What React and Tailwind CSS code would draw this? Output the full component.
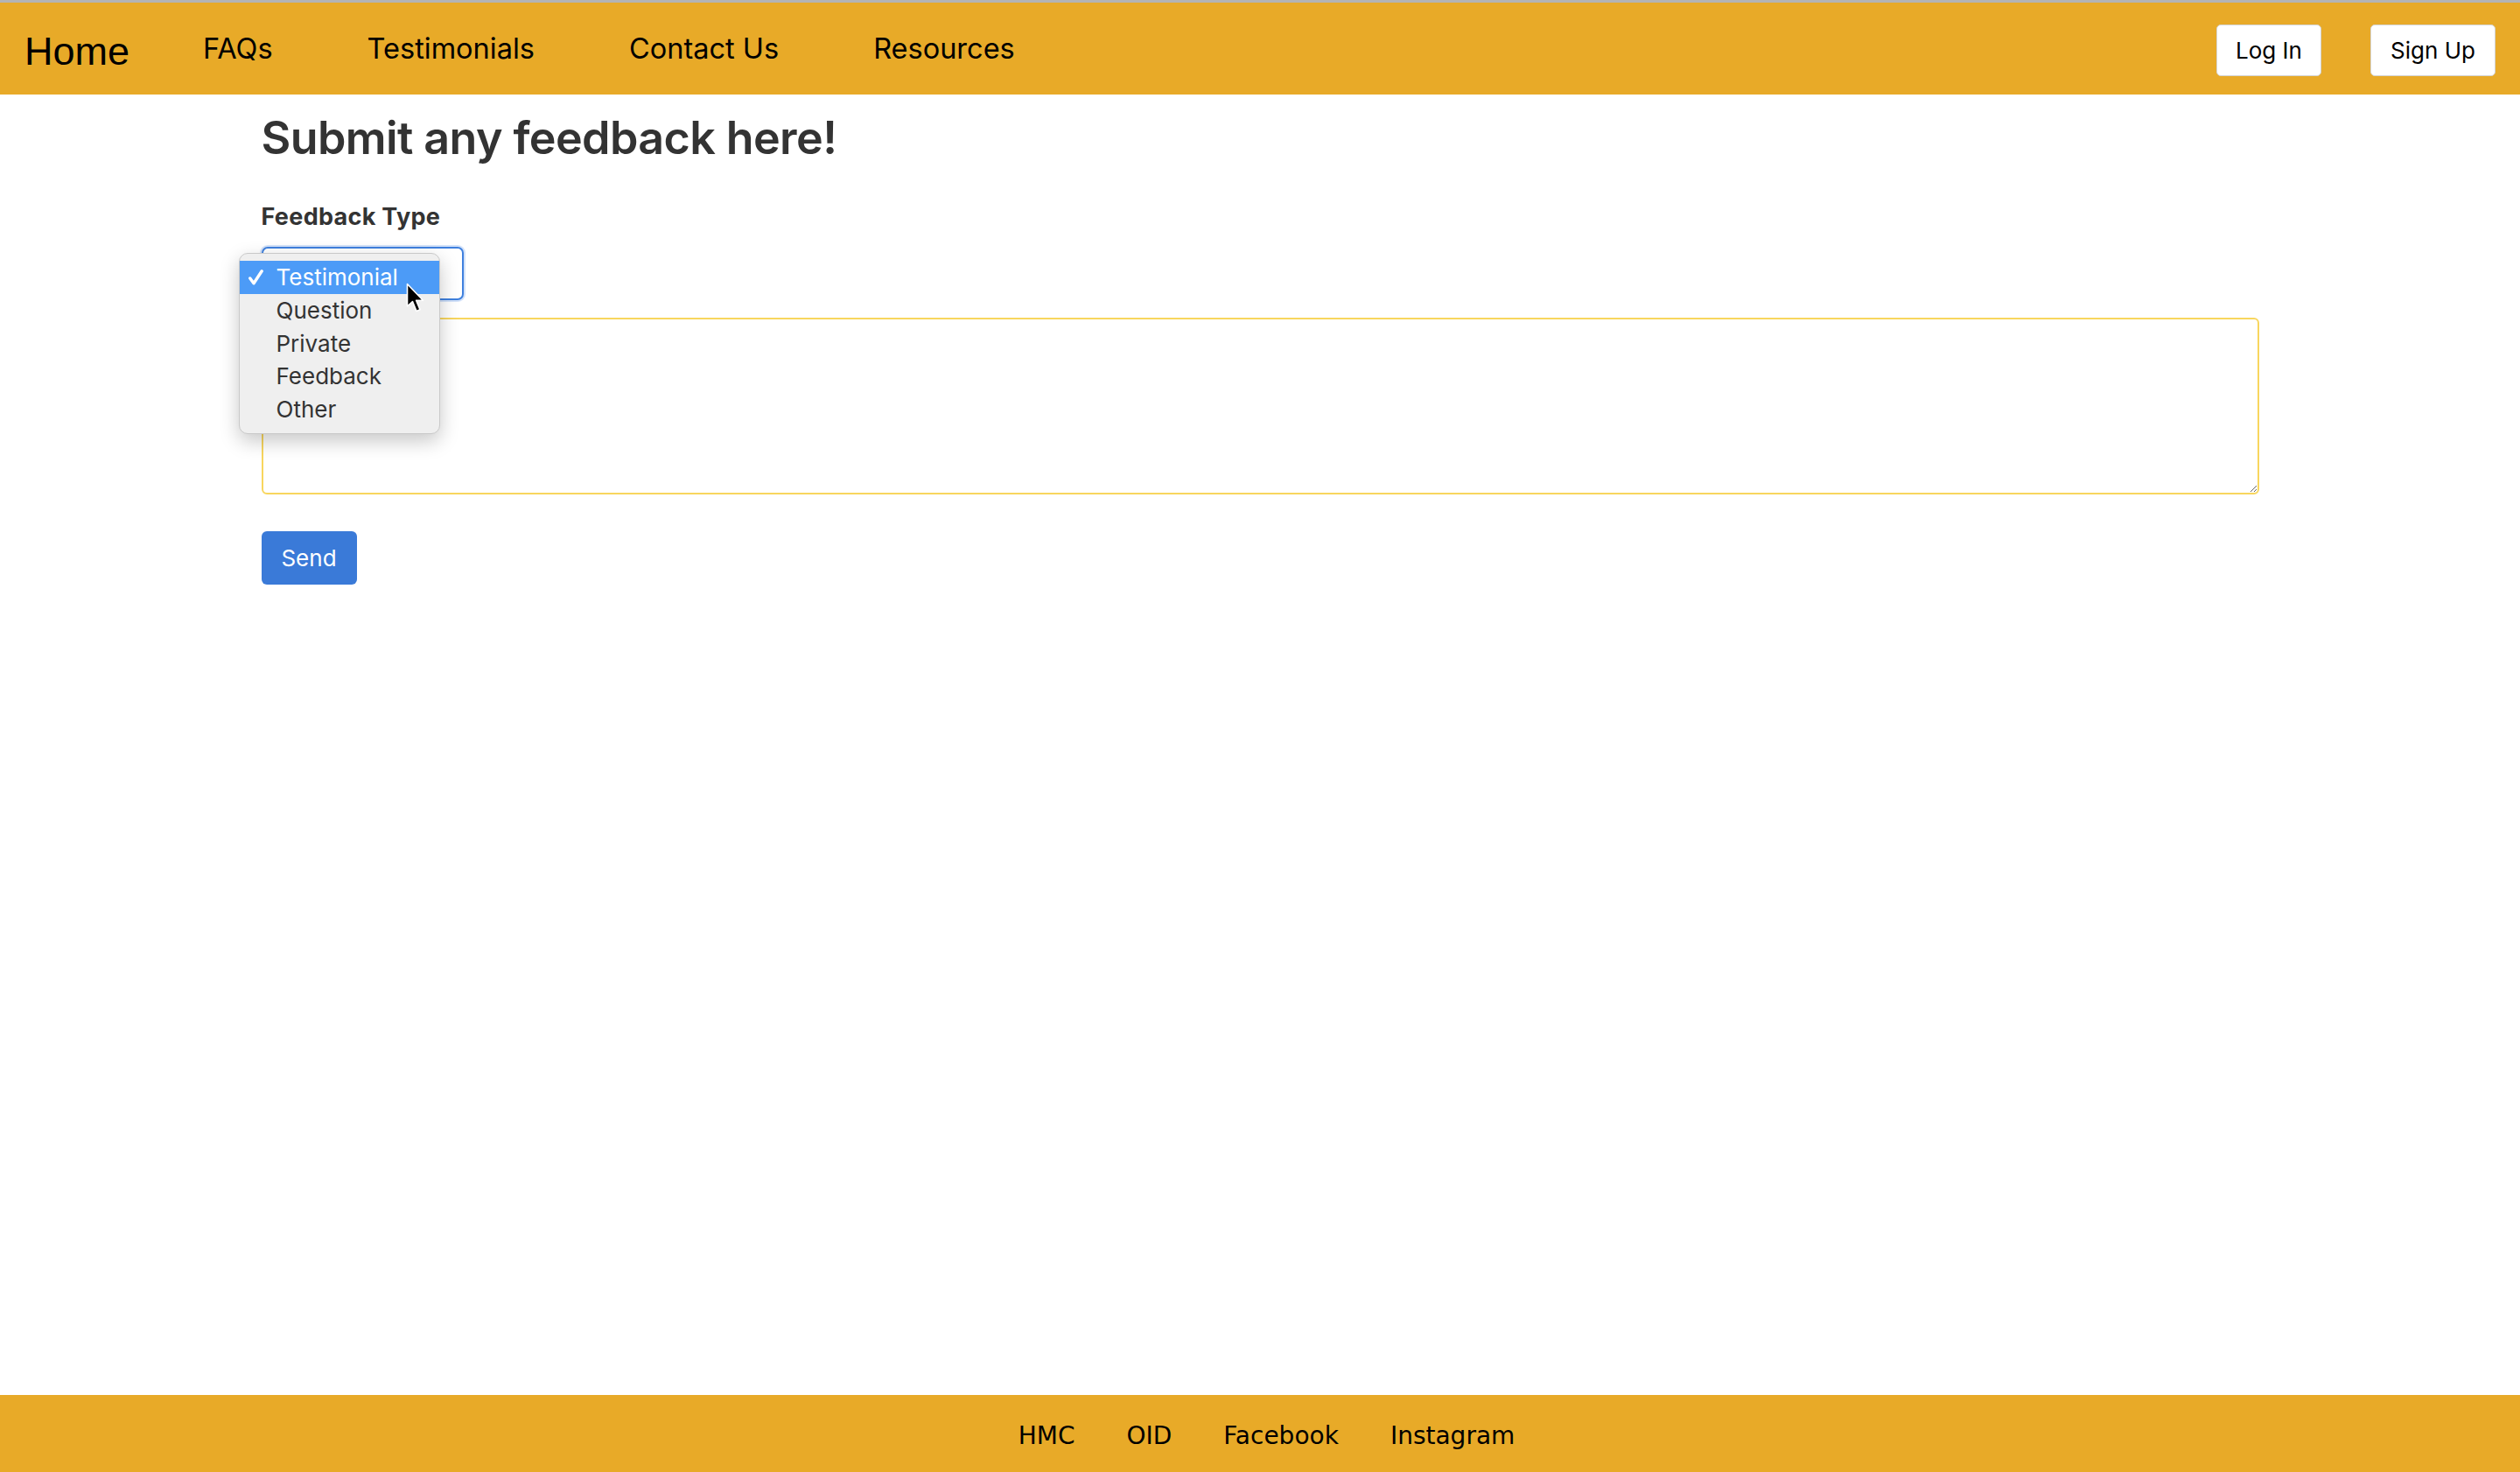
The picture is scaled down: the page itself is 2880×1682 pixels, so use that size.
import React from "react";

export default function App() {
  const navLinks = ["FAQs", "Testimonials", "Contact Us", "Resources"];
  const options = ["Testimonial", "Question", "Private", "Feedback", "Other"];
  const footerLinks = ["HMC", "OID", "Facebook", "Instagram"];
  return (
    <div className="h-screen w-full flex flex-col bg-white overflow-hidden">
      <div className="h-[3px] bg-[#b4b4b4] shrink-0" />
      <nav className="h-[105px] shrink-0 bg-[#e8aa28] flex items-center pl-[28px] pr-[28px] font-['Liberation_Sans',Arial,sans-serif] text-black">
        <a className="text-[45px] leading-none mt-[5px] mr-[84px]">Home</a>
        <div className="flex items-center gap-[108px] mt-[2px] font-['Inter',sans-serif]">
          {navLinks.map((l) => (
            <a key={l} className="text-[32.5px] leading-none">{l}</a>
          ))}
        </div>
        <div className="ml-auto flex items-center gap-[56px] font-['Inter',sans-serif] text-[26px] mt-[3px]">
          <button className="h-[59px] w-[120px] bg-white border border-[#d4d4d4] rounded-[5px] text-black">Log In</button>
          <button className="h-[59px] w-[143px] bg-white border border-[#d4d4d4] rounded-[5px] text-black">Sign Up</button>
        </div>
      </nav>

      <main className="flex-1 font-['Inter',sans-serif] text-[#333333]">
        <div className="mx-auto w-[2283px]">
          <h1 className="mt-[19px] text-[52px] font-semibold leading-[62px] tracking-[-0.6px]">Submit any feedback here!</h1>
          <div className="mt-[43px] text-[27px] font-bold leading-[32px] tracking-[0.3px]">Feedback Type</div>
          <div className="relative mt-[18px] w-[231px] h-[61px] border-2 border-[#3f80de] rounded-[7px] bg-white shadow-[0_0_0_2px_rgba(80,140,230,0.25)]">
            <div className="absolute left-[-28px] top-[5px] w-[230px] h-[207px] bg-[#efefef] border border-[#c9c9c9] rounded-[10px] shadow-[0_8px_22px_rgba(0,0,0,0.22)] pt-[8px] z-10">
              {options.map((o, i) => (
                <div
                  key={o}
                  className={
                    i === 0
                      ? "relative h-[38px] flex items-center pl-[42px] bg-[#4c9bf7] text-white text-[26px] leading-none"
                      : "relative h-[37.75px] flex items-center pl-[42px] text-[#333333] text-[26px] leading-none"
                  }
                >
                  {i === 0 && (
                    <svg className="absolute left-[10px] top-[10px]" width="17" height="18" viewBox="0 0 17 18">
                      <path d="M1.8 10 L6 15.8 L15.2 1.8" fill="none" stroke="white" strokeWidth="3.4" strokeLinecap="round" strokeLinejoin="round" />
                    </svg>
                  )}
                  {o}
                </div>
              ))}
            </div>
            <svg className="absolute left-[163px] top-[39px] z-20" width="22" height="36" viewBox="0 0 22 36">
              <path d="M1.5 1.5 L1.5 27 L7.5 21.5 L12 32.5 L16 30.8 L11.6 20.3 L19.5 20.3 Z" fill="black" stroke="white" strokeWidth="1.6" strokeLinejoin="round" />
            </svg>
          </div>
          <textarea className="block mt-[20px] w-full h-[202px] border-2 border-[#f8d65e] rounded-[6px] bg-white outline-none" />
          <button className="mt-[42px] h-[61px] w-[109px] bg-[#3a7ad8] text-white rounded-[6px] text-[26px] leading-none">Send</button>
        </div>
      </main>

      <footer className="h-[88px] shrink-0 bg-[#e8aa28] flex items-center justify-center pl-[15px] pt-[5px] font-['DejaVu_Sans',Verdana,sans-serif] text-[28px] text-black gap-[59px]">
        {footerLinks.map((l) => (
          <a key={l} className="leading-none">{l}</a>
        ))}
      </footer>
    </div>
  );
}
